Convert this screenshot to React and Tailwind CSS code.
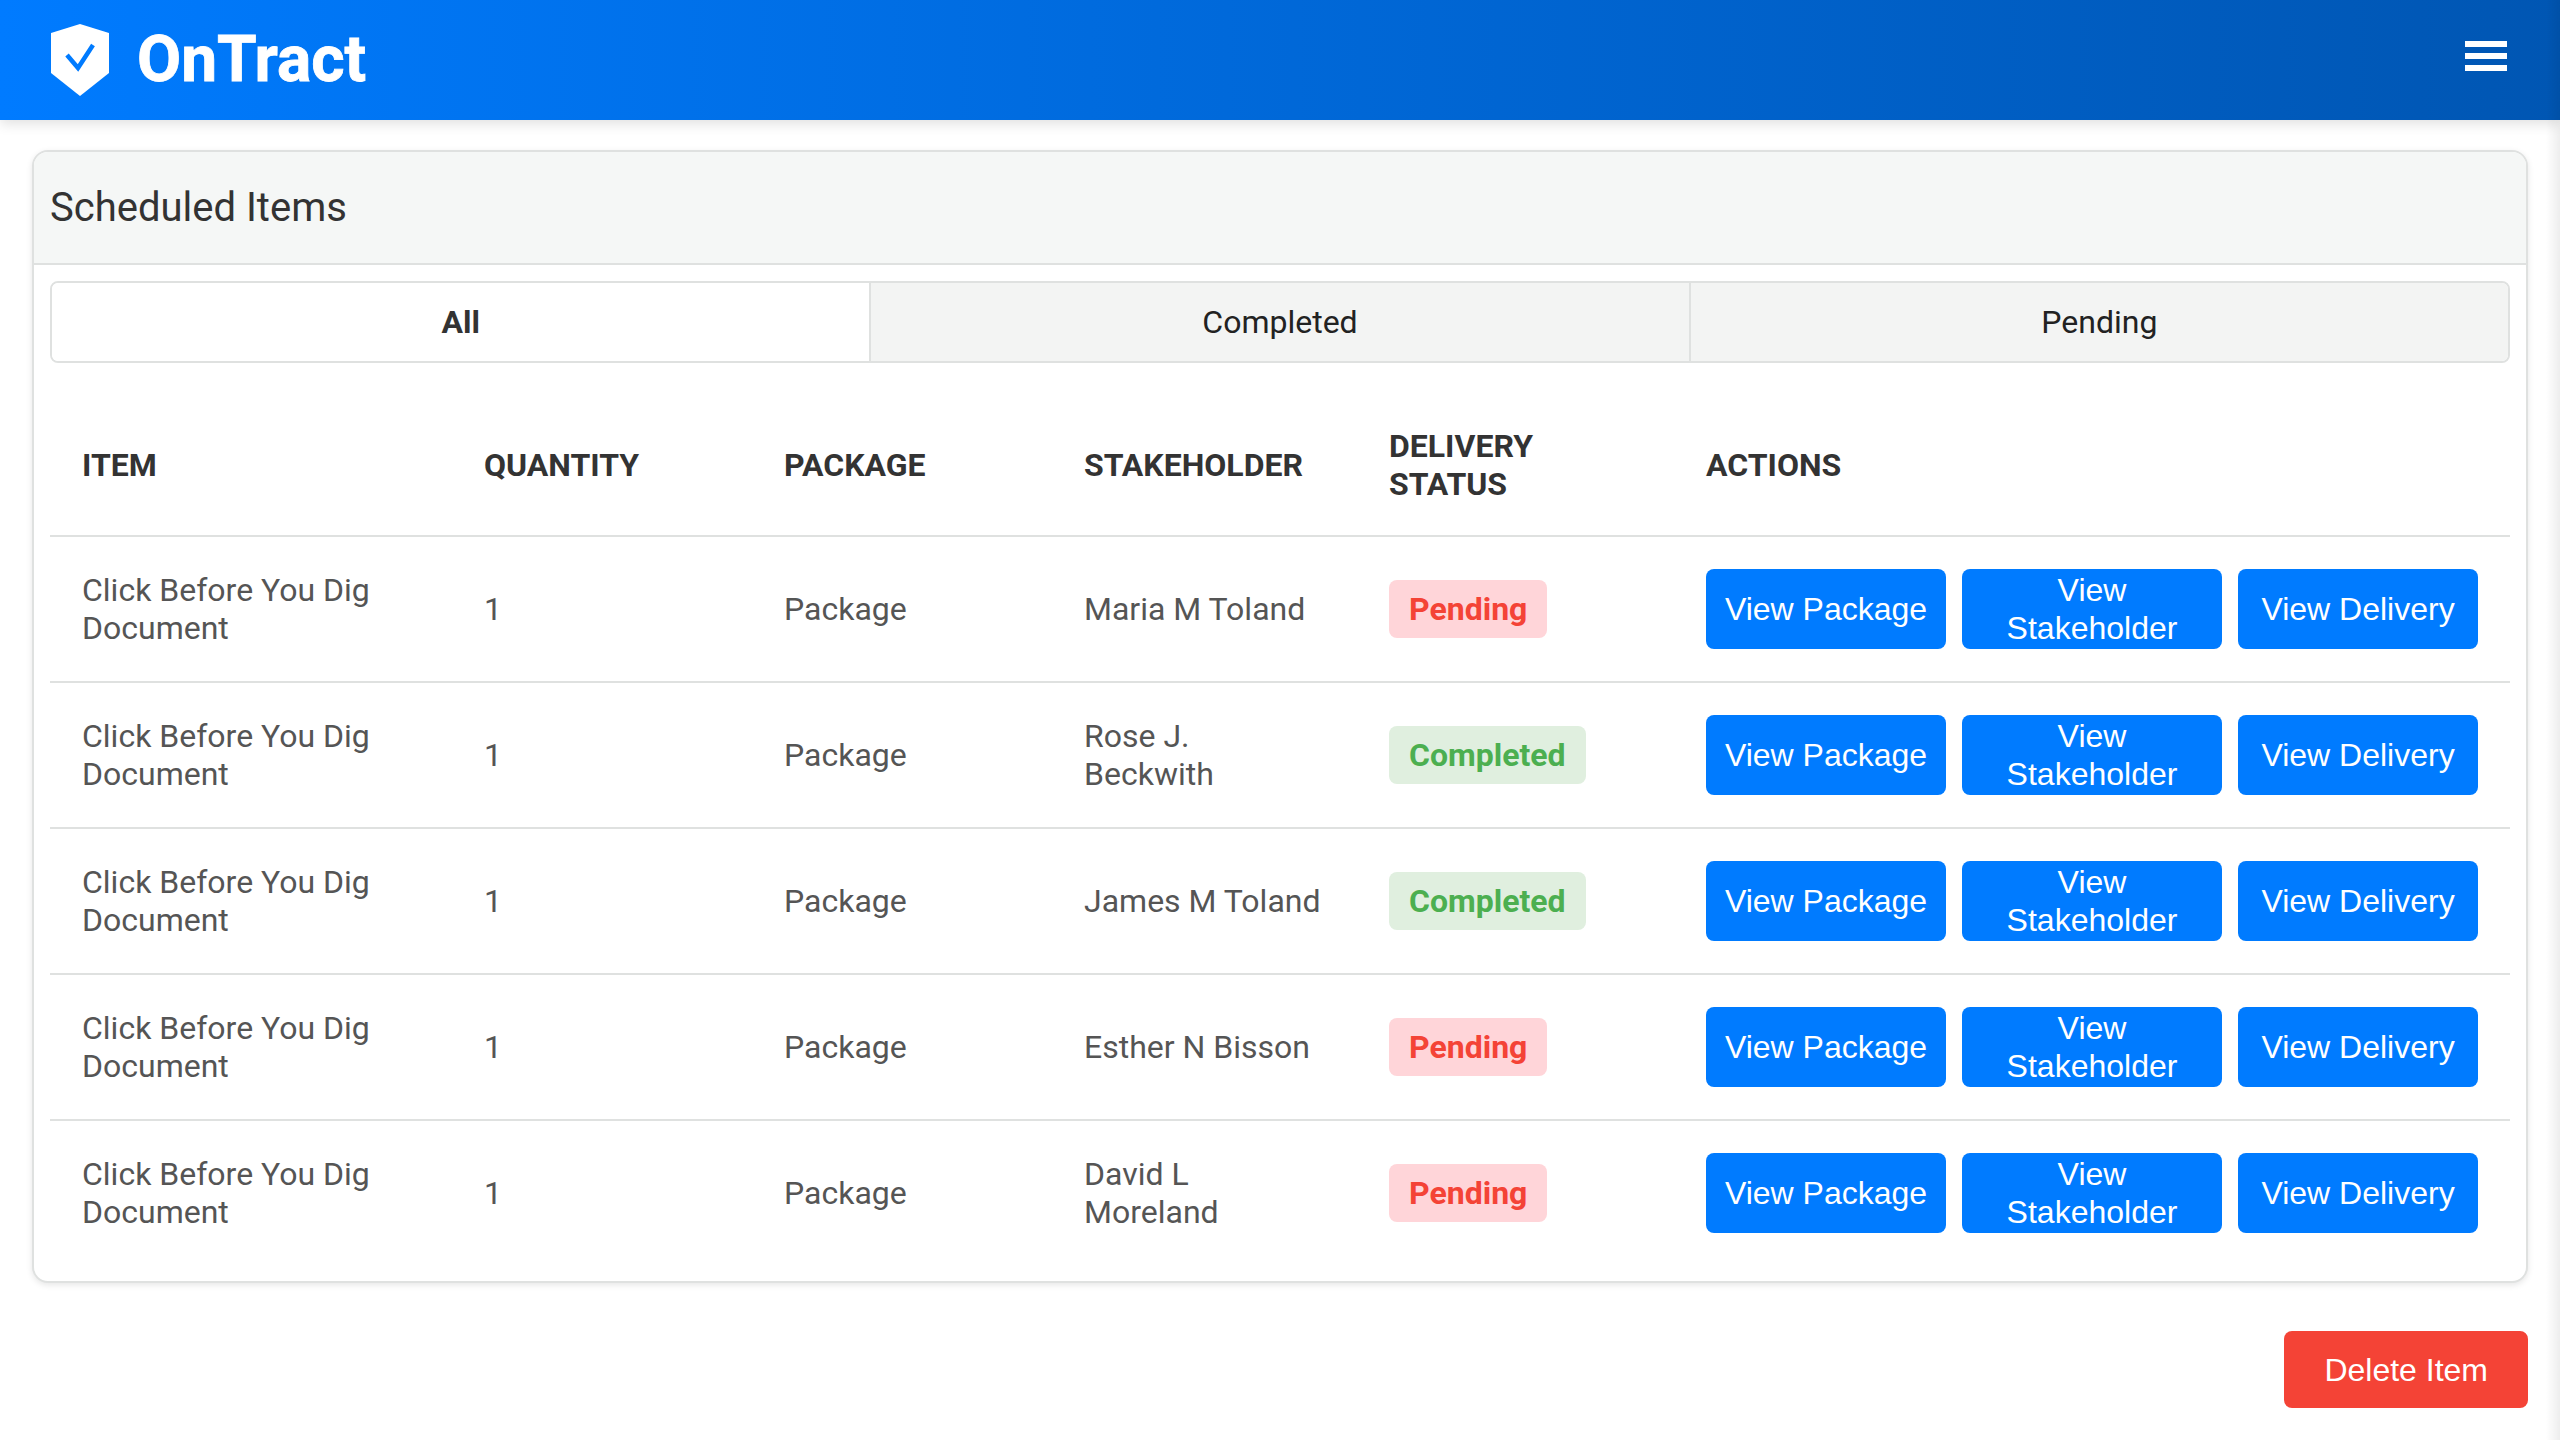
const font = { fontFamily: "Roboto, sans-serif" };

const rows = [
  ["Maria M Toland", "Pending"],
  ["Rose J. Beckwith", "Completed"],
  ["James M Toland", "Completed"],
  ["Esther N Bisson", "Pending"],
  ["David L Moreland", "Pending"],
];

function Shield() {
  return (
    <svg width="58" height="72" viewBox="0 0 58 72" className="shrink-0">
      <path d="M29 0 L58 9 V49 L29 72 L0 49 V9 Z" fill="#fff" />
      <path d="M16 31 L27 44 L42 21" fill="none" stroke="#007bff" strokeWidth="4.5" />
    </svg>
  );
}

function Badge({ status }) {
  const pending = status === "Pending";
  return (
    <span
      className={
        pending
          ? "inline-block rounded-lg bg-[#ffd5d9] px-5 py-[10px] text-[32px] leading-[38px] font-bold text-[#f44336]"
          : "inline-block rounded-lg bg-[#e0efdf] px-5 py-[10px] text-[32px] leading-[38px] font-bold text-[#4caf50]"
      }
    >
      {status}
    </span>
  );
}

function ActionButton({ wide, children }) {
  return (
    <button
      className={
        wide
          ? "h-20 w-[260px] shrink-0 rounded-lg bg-[#007bff] px-5 text-center text-[32px] leading-[38px] text-white font-['Liberation_Sans',sans-serif]"
          : "h-20 w-[240px] shrink-0 rounded-lg bg-[#007bff] text-center text-[32px] leading-[38px] text-white font-['Liberation_Sans',sans-serif]"
      }
    >
      {children}
    </button>
  );
}

export default function App() {
  return (
    <div className="relative h-[1440px] overflow-hidden bg-white" style={font}>
      <header className="flex h-[120px] items-center justify-between bg-gradient-to-r from-[#007bff] to-[#0056b3] pl-[51px] pr-[53px] shadow-[0_4px_12px_rgba(0,0,0,0.12)]">
        <div className="flex items-center gap-[28px]">
          <Shield />
          <span className="text-[64px] leading-none font-bold text-white [-webkit-text-stroke:0.8px_white]">OnTract</span>
        </div>
        <div className="mb-2 flex w-[42px] flex-col gap-[6px]">
          <span className="h-[6px] bg-white" />
          <span className="h-[6px] bg-white" />
          <span className="h-[6px] bg-white" />
        </div>
      </header>

      <main className="px-8 pt-[30px]">
        <section className="overflow-hidden rounded-2xl border-2 border-[#dfe1e0] bg-white shadow-[0_2px_6px_rgba(0,0,0,0.1)]">
          <div className="border-b-2 border-[#dfe1e0] bg-[#f5f7f6] px-4 py-8 text-[40px] leading-[47px] text-[#333]">
            Scheduled Items
          </div>
          <div className="p-4">
            <div className="flex h-[82px] overflow-hidden rounded-lg border-2 border-[#dfe1e0] text-[32px] text-[#222]">
              <div className="flex flex-1 items-center justify-center bg-white font-bold text-[#333]">All</div>
              <div className="flex flex-1 items-center justify-center border-l-2 border-[#dfe1e0] bg-[#f3f4f3]">Completed</div>
              <div className="flex flex-1 items-center justify-center border-l-2 border-[#dfe1e0] bg-[#f3f4f3]">Pending</div>
            </div>
            <table className="mt-8 w-full table-fixed border-collapse text-left text-[32px] leading-[38px] text-[#555]">
              <colgroup>
                <col className="w-[402px]" />
                <col className="w-[300px]" />
                <col className="w-[300px]" />
                <col className="w-[305px]" />
                <col className="w-[317px]" />
                <col />
              </colgroup>
              <thead>
                <tr className="border-b-2 border-[#dfe1e0] text-[#333]">
                  <th className="p-8 font-bold">ITEM</th>
                  <th className="p-8 font-bold">QUANTITY</th>
                  <th className="p-8 font-bold">PACKAGE</th>
                  <th className="p-8 font-bold">STAKEHOLDER</th>
                  <th className="p-8 font-bold">DELIVERY STATUS</th>
                  <th className="p-8 font-bold">ACTIONS</th>
                </tr>
              </thead>
              <tbody>
                {rows.map(([name, status], i) => (
                  <tr key={i} className={i < rows.length - 1 ? "border-b-2 border-[#dfe1e0]" : ""}>
                    <td className="px-8 py-0">Click Before You Dig Document</td>
                    <td className="px-8 py-0">1</td>
                    <td className="px-8 py-0">Package</td>
                    <td className="px-8 py-0">{name}</td>
                    <td className="px-8 py-0"><Badge status={status} /></td>
                    <td className="px-8 py-8">
                      <div className="flex gap-4">
                        <ActionButton>View Package</ActionButton>
                        <ActionButton wide>View Stakeholder</ActionButton>
                        <ActionButton>View Delivery</ActionButton>
                      </div>
                    </td>
                  </tr>
                ))}
              </tbody>
            </table>
          </div>
        </section>
        <div className="mt-[48px] flex justify-end">
          <button className="h-[77px] rounded-lg bg-[#f44336] px-10 text-[32px] text-white font-['Liberation_Sans',sans-serif]">
            Delete Item
          </button>
        </div>
      </main>
      <div className="pointer-events-none absolute inset-y-0 right-0 w-[14px] bg-gradient-to-r from-transparent to-[rgba(0,0,0,0.07)]" />
    </div>
  );
}
